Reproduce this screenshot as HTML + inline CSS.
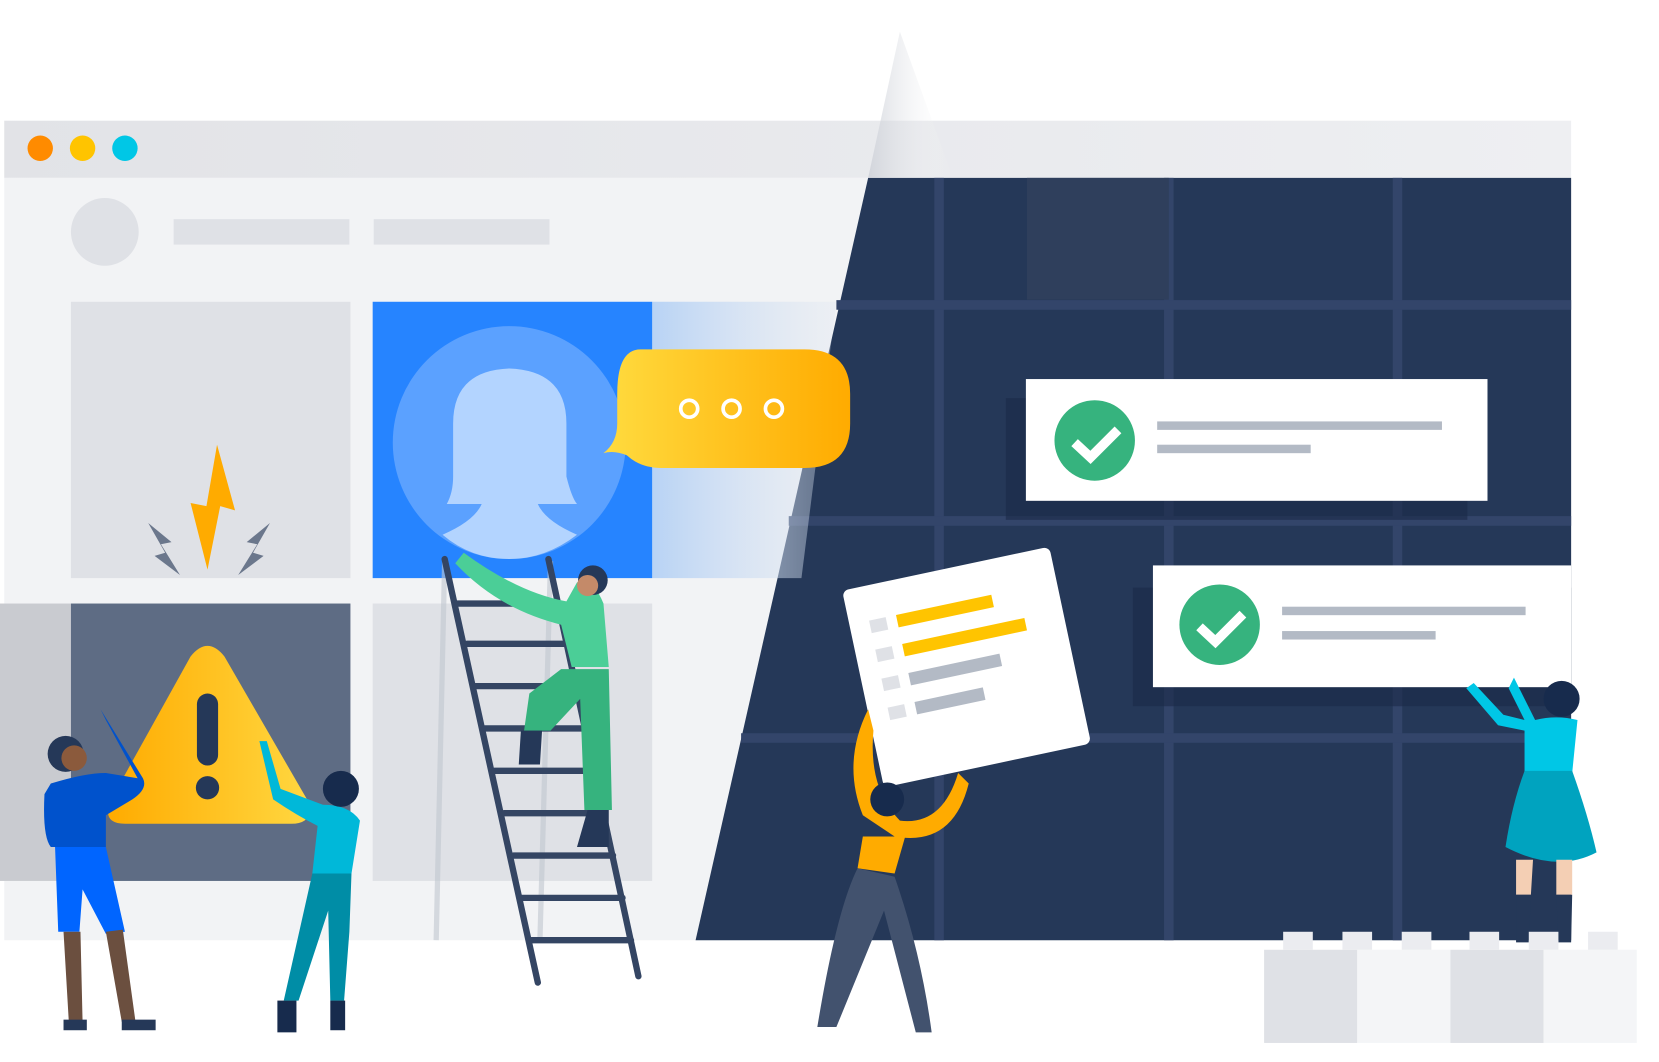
<!DOCTYPE html>
<html><head><meta charset="utf-8"><style>html,body{margin:0;padding:0;background:#fff;overflow:hidden}svg{display:block}</style></head>
<body>
<svg width="1659" height="1062" viewBox="0 0 1567 1003" preserveAspectRatio="none" xmlns="http://www.w3.org/2000/svg">
<defs>
<linearGradient id="bub" x1="0" x2="1"><stop offset="0" stop-color="#ffdb3f"/><stop offset="1" stop-color="#ffab00"/></linearGradient>
<linearGradient id="beam" x1="0" x2="1"><stop offset="0" stop-color="#b8d3f5"/><stop offset="1" stop-color="#dfe6f0" stop-opacity="0.3"/></linearGradient>
<linearGradient id="lb" x1="0" x2="1"><stop offset="0" stop-color="#c8ccd4" stop-opacity="0.7"/><stop offset="1" stop-color="#fff" stop-opacity="0"/></linearGradient>
<linearGradient id="warn" x1="0" x2="1"><stop offset="0" stop-color="#ffab00"/><stop offset="1" stop-color="#ffd740"/></linearGradient>
<linearGradient id="tb" x1="0" x2="1"><stop offset="0" stop-color="#e2e3e7"/><stop offset="1" stop-color="#eeeff2"/></linearGradient>
</defs>
<rect x="4" y="114" width="1480" height="54" fill="url(#tb)"/>
<circle cx="38" cy="140" r="12" fill="#ff8b00"/>
<circle cx="78" cy="140" r="12" fill="#ffc400"/>
<circle cx="118" cy="140" r="12" fill="#00c7e6"/>
<rect x="4" y="168" width="1480" height="720" fill="#f2f3f5"/>
<polygon points="820,168 1484,168 1484,888 657,888" fill="#253858"/>
<polygon points="850,30 820,168 900,168" fill="url(#lb)"/>
<g stroke="#33456a" stroke-width="9">
<line x1="887" y1="168" x2="887" y2="888"/><line x1="1104" y1="168" x2="1104" y2="888"/><line x1="1320" y1="168" x2="1320" y2="888"/>
<line x1="790" y1="288" x2="1484" y2="288"/><line x1="745" y1="492" x2="1484" y2="492"/><line x1="700" y1="697" x2="1484" y2="697"/>
</g>
<rect x="970" y="168" width="134" height="115" fill="#2f3f5c"/>
<circle cx="99" cy="219" r="32" fill="#dfe1e6"/>
<rect x="164" y="207" width="166" height="24" fill="#dfe1e6"/>
<rect x="353" y="207" width="166" height="24" fill="#dfe1e6"/>
<rect x="67" y="285" width="264" height="261" fill="#dfe1e6"/>
<polygon points="205,420 222,482 208,478 196,538 180,475 195,478" fill="#ffab00"/>
<polygon points="140,494 162,512 152,514 170,543 146,525 156,522" fill="#6b778c"/>
<polygon points="255,494 233,512 243,514 225,543 249,525 239,522" fill="#6b778c"/>
<polygon points="616,285 790,285 757,546 616,546" fill="url(#beam)"/>
<rect x="352" y="285" width="264" height="261" fill="#2684ff"/>
<circle cx="481" cy="418" r="110" fill="#5ba1ff"/>
<path d="M428,400 Q428,350 481,348 Q535,350 535,400 L535,450 Q540,470 545,476 L508,476 Q515,492 545,505 Q515,528 481,528 Q445,528 418,505 Q448,492 455,476 L422,476 Q428,465 428,450 Z" fill="#b3d4ff"/>
<path d="M605,330 L760,330 Q803,330 803,372 L803,400 Q803,442 760,442 L625,442 Q605,442 592,430 Q580,425 570,428 Q583,418 583,400 L583,372 Q583,330 605,330 Z" fill="url(#bub)"/>
<g fill="none" stroke="#fff" stroke-width="3.5"><circle cx="651" cy="386" r="8"/><circle cx="691" cy="386" r="8"/><circle cx="731" cy="386" r="8"/></g>
<rect x="0" y="570" width="67" height="262" fill="#c9cbd0"/>
<rect x="67" y="570" width="264" height="262" fill="#5e6c84"/>
<rect x="352" y="570" width="264" height="262" fill="#dfe1e6"/>
<path d="M180,620 Q196,600 212,620 L290,755 Q298,778 275,778 L118,778 Q95,778 105,755 Z" fill="url(#warn)"/>
<rect x="186" y="655" width="20" height="68" rx="10" fill="#253858"/>
<circle cx="196" cy="744" r="11" fill="#253858"/>
<g stroke="#c1c7d0" stroke-width="5" opacity="0.6"><line x1="420" y1="530" x2="412" y2="888"/><line x1="520" y1="530" x2="510" y2="888"/></g>
<g stroke="#344563" stroke-width="6" stroke-linecap="round">
<line x1="420" y1="528" x2="508" y2="928"/><line x1="518" y1="528" x2="603" y2="922"/>
<line x1="432" y1="570" x2="528" y2="570"/><line x1="441" y1="608" x2="536" y2="608"/><line x1="449" y1="648" x2="545" y2="648"/>
<line x1="458" y1="688" x2="553" y2="688"/><line x1="467" y1="728" x2="562" y2="728"/><line x1="476" y1="768" x2="570" y2="768"/>
<line x1="485" y1="808" x2="579" y2="808"/><line x1="493" y1="848" x2="588" y2="848"/><line x1="502" y1="888" x2="596" y2="888"/>
</g>
<path d="M430,532 Q470,575 530,590 L540,630 L575,630 L570,570 Q560,545 545,550 L535,568 Q490,560 438,522 Z" fill="#4bce97"/>
<path d="M530,632 L575,632 L578,765 L552,765 L548,660 L520,690 L495,690 L500,655 Z" fill="#36b37e"/>
<path d="M492,690 L512,690 L510,722 L490,722 Z M555,765 L575,765 L575,800 L545,800 Z" fill="#253858"/>
<circle cx="560" cy="548" r="14" fill="#253858"/><circle cx="555" cy="553" r="10" fill="#c48a69"/>
<rect x="950" y="376" width="436" height="115" fill="#1a2a47" opacity="0.6"/>
<rect x="969" y="358" width="436" height="115" fill="#fff"/>
<circle cx="1034" cy="416" r="38" fill="#36b37e"/>
<path d="M1015,418 L1030,432 L1056,406" fill="none" stroke="#fff" stroke-width="9"/>
<rect x="1093" y="398" width="269" height="8" fill="#b3bac5"/>
<rect x="1093" y="420" width="145" height="8" fill="#b3bac5"/>
<rect x="1070" y="555" width="414" height="112" fill="#1a2a47" opacity="0.6"/>
<rect x="1089" y="534" width="395" height="115" fill="#fff"/>
<circle cx="1152" cy="590" r="38" fill="#36b37e"/>
<path d="M1133,592 L1148,606 L1174,580" fill="none" stroke="#fff" stroke-width="9"/>
<rect x="1211" y="573" width="230" height="8" fill="#b3bac5"/>
<rect x="1211" y="596" width="145" height="8" fill="#b3bac5"/>
<g transform="rotate(-12 913 630)">
<rect x="813" y="535" width="200" height="190" rx="6" fill="#fff"/>
<rect x="832" y="568" width="16" height="12" fill="#dfe1e6"/><rect x="858" y="568" width="92" height="12" fill="#ffc400"/>
<rect x="832" y="596" width="16" height="12" fill="#dfe1e6"/><rect x="858" y="596" width="118" height="12" fill="#ffc400"/>
<rect x="832" y="624" width="16" height="12" fill="#dfe1e6"/><rect x="858" y="624" width="88" height="12" fill="#b3bac5"/>
<rect x="832" y="652" width="16" height="12" fill="#dfe1e6"/><rect x="858" y="652" width="66" height="12" fill="#b3bac5"/>
</g>
<path d="M820,670 Q795,720 815,770 L845,790 Q900,800 915,740 L905,730 Q890,780 850,775 Q820,745 825,690 Z" fill="#ffab00"/>
<path d="M815,790 L855,790 L845,825 L810,820 Z" fill="#ffab00"/>
<path d="M810,820 L845,828 Q870,900 880,975 L865,975 L835,860 L790,970 L772,970 Q790,860 810,820 Z" fill="#42526e"/>
<circle cx="838" cy="755" r="16" fill="#172b4d"/>
<path d="M48,740 Q80,730 100,730 L130,735 L100,680 L95,670 L135,735 Q140,745 125,755 L100,770 L100,800 L48,800 Q40,790 42,750 Z" fill="#0052cc"/>
<path d="M52,800 L100,800 L118,880 L100,882 L78,840 L75,880 L55,880 Z" fill="#0065ff"/>
<path d="M60,880 L76,880 L78,965 L65,965 Z M100,880 L116,878 L128,965 L115,965 Z" fill="#6b4f3f"/>
<circle cx="62" cy="712" r="17" fill="#253858"/><circle cx="70" cy="716" r="12" fill="#8b5a3c"/>
<rect x="60" y="963" width="22" height="10" fill="#253858"/><rect x="115" y="963" width="32" height="10" fill="#253858"/>
<path d="M245,700 L258,755 Q280,770 300,780 L295,825 L332,825 L340,775 Q330,760 305,760 L265,745 L252,700 Z" fill="#00b8d9"/>
<path d="M295,825 L332,825 L330,880 L325,945 L312,945 L310,860 L282,945 L268,945 Z" fill="#008da6"/>
<circle cx="322" cy="745" r="17" fill="#172b4d"/>
<rect x="262" y="945" width="18" height="30" fill="#172b4d"/><rect x="312" y="945" width="14" height="28" fill="#172b4d"/>
<path d="M1385,650 L1415,685 L1440,690 L1440,730 L1485,730 L1490,680 Q1470,675 1450,680 L1430,640 L1425,650 L1440,680 L1420,675 L1392,645 Z" fill="#00c7e6"/>
<path d="M1440,728 L1485,728 Q1500,770 1508,805 Q1470,825 1422,800 Q1428,760 1440,728 Z" fill="#00a3bf"/>
<path d="M1432,812 L1448,812 L1446,845 L1432,845 Z M1470,812 L1485,812 L1485,845 L1470,845 Z" fill="#f4cfb4"/>
<path d="M1432,845 L1446,845 L1444,890 L1432,890 Z M1470,845 L1485,845 L1484,890 L1472,890 Z" fill="#253858"/>
<circle cx="1475" cy="660" r="17" fill="#172b4d"/>
<rect x="1194" y="897" width="88" height="88" fill="#dfe1e6"/>
<rect x="1282" y="897" width="88" height="88" fill="#f4f5f7"/>
<rect x="1370" y="897" width="88" height="88" fill="#dfe1e6"/>
<rect x="1458" y="897" width="88" height="88" fill="#f4f5f7"/>
<g fill="#ebecf0"><rect x="1212" y="880" width="28" height="17"/><rect x="1268" y="880" width="28" height="17"/><rect x="1324" y="880" width="28" height="17"/><rect x="1388" y="880" width="28" height="17"/><rect x="1444" y="880" width="28" height="17"/><rect x="1500" y="880" width="28" height="17"/></g>
</svg>
</body></html>
